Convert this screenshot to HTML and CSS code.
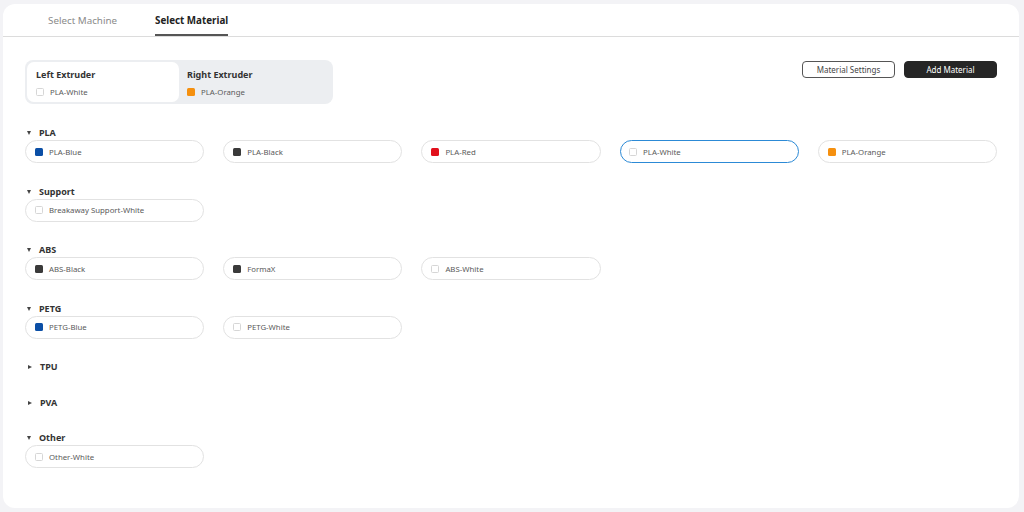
FILE: index.html
```html
<!DOCTYPE html>
<html>
<head>
<meta charset="utf-8">
<link rel="stylesheet" href="styles.css">
</head>
<body>
<div class="card">
  <div class="tabs">
    <div class="tab">Select Machine</div>
    <div class="tab active">Select Material</div>
  </div>
  <div class="content">
    <div class="toprow">
      <div class="extruders">
        <div class="ext selected">
          <div class="ext-title">Left Extruder</div>
          <div class="ext-mat"><span class="sw white"></span>PLA-White</div>
        </div>
        <div class="ext">
          <div class="ext-title">Right Extruder</div>
          <div class="ext-mat"><span class="sw orange"></span>PLA-Orange</div>
        </div>
      </div>
      <div class="actions">
        <button class="btn outline">Material Settings</button>
        <button class="btn dark">Add Material</button>
      </div>
    </div>

    <div class="group">
      <div class="ghead"><span class="tri down"></span>PLA</div>
      <div class="chips">
        <div class="chip"><span class="sw blue"></span>PLA-Blue</div>
        <div class="chip"><span class="sw black"></span>PLA-Black</div>
        <div class="chip"><span class="sw red"></span>PLA-Red</div>
        <div class="chip active"><span class="sw white"></span>PLA-White</div>
        <div class="chip"><span class="sw orange"></span>PLA-Orange</div>
      </div>
    </div>
    <div class="group">
      <div class="ghead"><span class="tri down"></span>Support</div>
      <div class="chips">
        <div class="chip"><span class="sw white"></span>Breakaway Support-White</div>
      </div>
    </div>
    <div class="group">
      <div class="ghead"><span class="tri down"></span>ABS</div>
      <div class="chips">
        <div class="chip"><span class="sw black"></span>ABS-Black</div>
        <div class="chip"><span class="sw black"></span>FormaX</div>
        <div class="chip"><span class="sw white"></span>ABS-White</div>
      </div>
    </div>
    <div class="group">
      <div class="ghead"><span class="tri down"></span>PETG</div>
      <div class="chips">
        <div class="chip"><span class="sw blue"></span>PETG-Blue</div>
        <div class="chip"><span class="sw white"></span>PETG-White</div>
      </div>
    </div>
    <div class="group collapsed">
      <div class="ghead"><span class="tri right"></span>TPU</div>
    </div>
    <div class="group collapsed">
      <div class="ghead"><span class="tri right"></span>PVA</div>
    </div>
    <div class="group">
      <div class="ghead"><span class="tri down"></span>Other</div>
      <div class="chips">
        <div class="chip"><span class="sw white"></span>Other-White</div>
      </div>
    </div>
  </div>
</div>
</body>
</html>
```
FILE: styles.css
```css
* { box-sizing: border-box; }
html, body { margin: 0; padding: 0; }
body {
  background: #f3f3f6;
  font-family: "Noto Sans", "Open Sans", sans-serif;
  color: #333;
  width: 1024px;
  height: 512px;
  overflow: hidden;
}
.card {
  margin: 4px 5px 0 3px;
  height: 504px;
  background: #fff;
  border-radius: 12px;
}
.tabs {
  display: flex;
  gap: 38px;
  padding-left: 45px;
  height: 33px;
  border-bottom: 1px solid #dcdcdc;
}
.tab {
  font-size: 9.8px;
  color: #8a8a8a;
  line-height: 34px;
  height: 32px;
  border-bottom: 2px solid transparent;
}
.tab.active {
  color: #222;
  font-weight: 700;
  border-bottom-color: #555;
}
.content {
  padding: 23px 22px 0 22px;
}
.toprow {
  display: flex;
  justify-content: space-between;
  align-items: flex-start;
  margin-bottom: 23px;
}
.extruders {
  width: 308px;
  height: 44px;
  background: #eceef1;
  border-radius: 8px;
  padding: 2px;
  display: flex;
}
.ext {
  width: 153px;
  border-radius: 7px;
  padding: 6px 8px 0 8px;
}
.ext.selected { background: #fff; width: 153px; padding-left: 9px; }
.ext-title {
  font-size: 9px;
  font-weight: 700;
  color: #333;
  line-height: 13px;
}
.ext-mat {
  display: flex;
  align-items: center;
  font-size: 7.8px;
  color: #5a5a5a;
  margin-top: 6px;
  line-height: 10px;
}
.ext-mat .sw { margin-right: 6px; }
.actions {
  display: flex;
  gap: 9px;
  margin-top: 1px;
}
.btn {
  width: 93px;
  height: 17px;
  border-radius: 4px;
  font-family: "Noto Sans", "Open Sans", sans-serif;
  font-size: 8px;
  padding: 0;
  line-height: 15px;
}
.btn.outline { background: #fff; border: 1px solid #555; color: #444; }
.btn.dark { background: #262626; border: 1px solid #262626; color: #fff; }
.group { margin-bottom: 22.5px; }
.group.collapsed { margin-bottom: 23.5px; }
.ghead {
  display: flex;
  align-items: center;
  font-size: 9px;
  font-weight: 700;
  color: #333;
  line-height: 12px;
  height: 12px;
  margin-bottom: 1px;
}
.tri {
  width: 0; height: 0;
  margin-left: 2px;
  margin-right: 8px;
}
.tri.down {
  border-left: 2.5px solid transparent;
  border-right: 2.5px solid transparent;
  border-top: 4px solid #444;
}
.tri.right {
  border-top: 2.5px solid transparent;
  border-bottom: 2.5px solid transparent;
  border-left: 4px solid #444;
  margin-left: 3px;
  margin-right: 8px;
}
.chips {
  display: grid;
  grid-template-columns: repeat(5, 1fr);
  column-gap: 19px;
}
.chip {
  height: 23px;
  border: 1px solid #e2e2e2;
  border-radius: 12px;
  display: flex;
  align-items: center;
  padding-left: 9px;
  font-size: 7.8px;
  color: #5a5a5a;
}
.chip.active { border: 1.5px solid #2c8ad6; padding-left: 8.5px; }
.chip .sw { margin-right: 6px; }
.sw {
  display: inline-block;
  width: 8px;
  height: 8px;
  border-radius: 1.5px;
  flex: none;
}
.sw.blue { background: #0b4fa6; }
.sw.black { background: #3a3a3a; }
.sw.red { background: #e1101c; }
.sw.orange { background: #f5900f; }
.sw.white { background: #fff; border: 1px solid #d6d6d6; }
```
